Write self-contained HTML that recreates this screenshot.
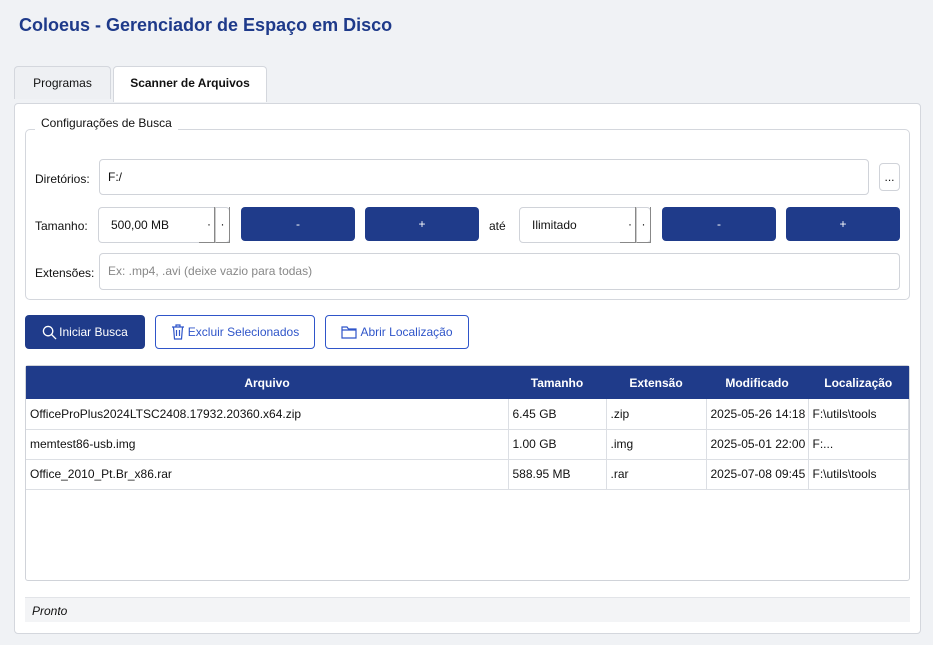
<!DOCTYPE html>
<html><head><meta charset="utf-8"><style>
*{box-sizing:border-box;margin:0;padding:0}
body{width:933px;height:645px;background:#f0f2f5;font-family:"Liberation Sans",sans-serif;font-size:12px;color:#111;position:relative;overflow:hidden}
.a{position:absolute}
h1{position:absolute;left:19px;top:15px;font-size:18px;font-weight:bold;color:#1e3a8a}
.tab{position:absolute;top:66px;height:33px;border:1px solid #d4d7dd;border-bottom:none;border-radius:4px 4px 0 0;text-align:center;line-height:32px;font-size:12px}
.panel{left:14px;top:103px;width:907px;height:531px;background:#fff;border:1px solid #d4d7dd;border-radius:4px}
.grp{left:25px;top:129px;width:885px;height:171px;border:1px solid #d4d7dd;border-radius:5px}
.inp{position:absolute;border:1px solid #d0d3d9;border-radius:4px;background:#fff;padding-left:8px;font-size:12px}
.btn{position:absolute;background:#1f3b8a;color:#fff;border-radius:4px;text-align:center;font-size:12px}
.ob{position:absolute;border:1px solid #2f55c9;border-radius:4px;color:#2f55c9;font-size:12px;display:flex;align-items:center;justify-content:center;gap:3px;background:#fff}
.lbl{position:absolute;font-size:12px}
table{border-collapse:collapse;position:absolute;left:26px;top:366px;width:883px;font-size:12px}
th{background:#1f3b8a;color:#fff;height:33px;font-weight:bold}
td{height:30px;border-right:1px solid #dcdfe4;border-bottom:1px solid #dcdfe4;padding-left:4px}
</style></head><body>
<h1>Coloeus - Gerenciador de Espaço em Disco</h1>
<div class="tab" style="left:14px;width:97px;background:#eef0f3">Programas</div>
<div class="tab" style="left:113px;width:154px;background:#fff;font-weight:bold;height:36px;z-index:2">Scanner de Arquivos</div>
<div class="a panel"></div>
<div class="a grp"></div>
<div class="lbl" style="left:35px;top:116px;background:#fff;padding:0 6px;left:35px">Configurações de Busca</div>
<div class="lbl" style="left:35px;top:172px">Diretórios:</div>
<div class="inp" style="left:99px;top:159px;width:770px;height:36px;line-height:34px">F:/</div>
<div class="inp" style="left:879px;top:163px;width:21px;height:28px;line-height:26px;padding:0;text-align:center">...</div>
<div class="lbl" style="left:35px;top:219px">Tamanho:</div>
<div class="inp" style="left:98px;top:207px;width:132px;height:36px;line-height:34px;padding-left:12px">500,00 MB<span class="a" style="left:100px;top:-1px;width:16px;height:36px;border-right:1px solid #888;border-bottom:1px solid #888;text-align:right;padding-right:3px">·</span><span class="a" style="left:116px;top:-1px;width:15px;height:36px;border-left:1px solid #ccc;border-right:1px solid #888;border-bottom:1px solid #888;text-align:center">·</span></div>
<div class="btn" style="left:241px;top:207px;width:114px;height:34px;line-height:34px">-</div>
<div class="btn" style="left:365px;top:207px;width:114px;height:34px;line-height:34px">+</div>
<div class="lbl" style="left:489px;top:219px">até</div>
<div class="inp" style="left:519px;top:207px;width:132px;height:36px;line-height:34px;padding-left:12px">Ilimitado<span class="a" style="left:100px;top:-1px;width:16px;height:36px;border-right:1px solid #888;border-bottom:1px solid #888;text-align:right;padding-right:3px">·</span><span class="a" style="left:116px;top:-1px;width:15px;height:36px;border-left:1px solid #ccc;border-right:1px solid #888;border-bottom:1px solid #888;text-align:center">·</span></div>
<div class="btn" style="left:662px;top:207px;width:114px;height:34px;line-height:34px">-</div>
<div class="btn" style="left:786px;top:207px;width:114px;height:34px;line-height:34px">+</div>
<div class="lbl" style="left:35px;top:266px">Extensões:</div>
<div class="inp" style="left:99px;top:253px;width:801px;height:37px;line-height:35px;color:#888">Ex: .mp4, .avi (deixe vazio para todas)</div>
<div class="btn" style="left:25px;top:315px;width:120px;height:34px;display:flex;align-items:center;justify-content:center;gap:2px"><svg width="15" height="15" viewBox="0 0 16 16" fill="none" stroke="#fff" stroke-width="1.4"><circle cx="6.5" cy="6.5" r="5"/><path d="M10 10l5 5"/></svg>Iniciar Busca</div>
<div class="ob" style="left:155px;top:315px;width:160px;height:34px"><svg width="14" height="16" viewBox="0 0 14 16" fill="none" stroke="#2f55c9" stroke-width="1.2"><path d="M1 3h12M5 3V1h4v2M2.5 3l1 12h7l1-12M5.5 6v6M8.5 6v6"/></svg>Excluir Selecionados</div>
<div class="ob" style="left:325px;top:315px;width:144px;height:34px"><svg width="16" height="14" viewBox="0 0 16 14" fill="none" stroke="#2f55c9" stroke-width="1.2"><path d="M1 2h5l1.5 2H15v9H1z M1 5h14"/></svg>Abrir Localização</div>
<div class="a" style="left:25px;top:365px;width:885px;height:216px;border:1px solid #d0d3d9;border-radius:3px"></div>
<table>
<tr><th style="width:482px">Arquivo</th><th style="width:98px">Tamanho</th><th style="width:100px">Extensão</th><th style="width:102px">Modificado</th><th>Localização</th></tr>
<tr><td>OfficeProPlus2024LTSC2408.17932.20360.x64.zip</td><td>6.45 GB</td><td>.zip</td><td>2025-05-26 14:18</td><td>F:\utils\tools</td></tr>
<tr><td>memtest86-usb.img</td><td>1.00 GB</td><td>.img</td><td>2025-05-01 22:00</td><td>F:...</td></tr>
<tr><td>Office_2010_Pt.Br_x86.rar</td><td>588.95 MB</td><td>.rar</td><td>2025-07-08 09:45</td><td>F:\utils\tools</td></tr>
</table>
<div class="a" style="left:25px;top:597px;width:885px;height:25px;background:#f3f4f6;border-top:1px solid #e2e4e8;font-style:italic;padding:6px 7px">Pronto</div>
</body></html>
